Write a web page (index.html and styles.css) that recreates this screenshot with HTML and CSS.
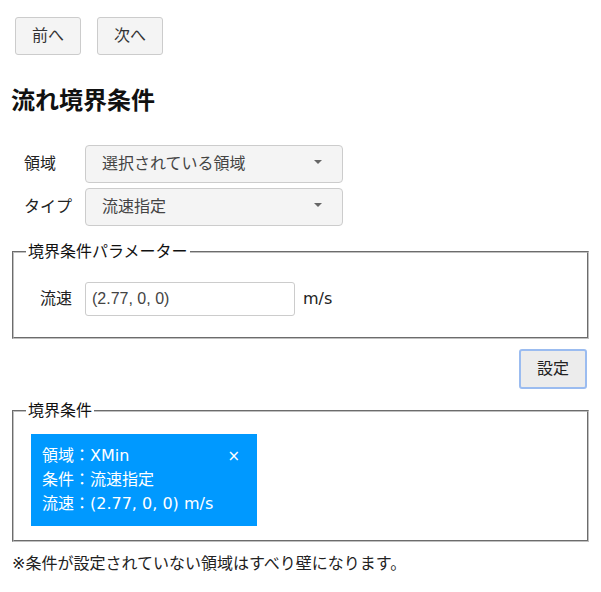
FILE: index.html
```html
<!DOCTYPE html>
<html lang="ja">
<head>
    <meta charset="UTF-8">
    <meta name="viewport" content="width=device-width, initial-scale=1.0">
    <title>流れ境界条件</title>
    <link rel="stylesheet" href="styles.css">
</head>
<body>
<div class="nav">
    <button class="nav-btn">前へ</button>
    <button class="nav-btn">次へ</button>
</div>

<h2 class="title">流れ境界条件</h2>

<div class="form">
    <label class="form-label" for="region">領域</label>
    <div class="select-wrap">
        <select id="region" class="select">
            <option>選択されている領域</option>
        </select>
    </div>
    <label class="form-label" for="type">タイプ</label>
    <div class="select-wrap">
        <select id="type" class="select">
            <option>流速指定</option>
        </select>
    </div>
</div>

<fieldset class="group params">
    <legend>境界条件パラメーター</legend>
    <div class="param-row">
        <label class="param-label" for="velocity">流速</label>
        <input id="velocity" class="text-input" type="text" value="(2.77, 0, 0)">
        <span class="unit">m/s</span>
    </div>
</fieldset>

<div class="actions">
    <button class="set-btn">設定</button>
</div>

<fieldset class="group">
    <legend>境界条件</legend>
    <div class="condition">
        <div class="condition-line">
            <span>領域：XMin</span>
            <span class="close">×</span>
        </div>
        <div class="condition-line">条件：流速指定</div>
        <div class="condition-line">流速：(2.77, 0, 0) m/s</div>
    </div>
</fieldset>

<p class="note">※条件が設定されていない領域はすべり壁になります。</p>
</body>
</html>
```

FILE: styles.css
```css
body {
    font-family: "DejaVu Sans", "Noto Sans CJK JP", sans-serif;
    font-size: 16px;
    line-height: 24px;
    color: #222;
    margin: 10px;
}

.nav {
    display: flex;
    gap: 16px;
    margin: 7px 0 0 5px;
}

.nav-btn {
    font: inherit;
    color: #333;
    width: 66px;
    height: 38px;
    background-color: #f4f4f4;
    border: 1px solid #ccc;
    border-radius: 3px;
    padding: 0;
}

.title {
    font-size: 24px;
    line-height: 32px;
    font-weight: bold;
    color: #111;
    margin: 30px 0 28px 1px;
}

.form {
    display: grid;
    grid-template-columns: 61px 258px;
    row-gap: 5px;
    align-items: center;
    padding-left: 14px;
}

.form-label {
    color: #222;
}

.select-wrap {
    position: relative;
}

.select-wrap::after {
    content: "";
    position: absolute;
    right: 21px;
    top: 15px;
    border-left: 4px solid transparent;
    border-right: 4px solid transparent;
    border-top: 4px solid #666;
}

.select {
    appearance: none;
    -webkit-appearance: none;
    font: inherit;
    color: #444;
    width: 100%;
    height: 38px;
    padding: 0 30px 0 16px;
    background-color: #f4f4f4;
    border: 1px solid #ccc;
    border-radius: 4px;
}

.group {
    margin: 0 2px;
    padding: 6px 12px 10px;
    border: 2px groove #c0c0c0;
}

.params {
    margin-top: 14px;
}

.group legend {
    padding: 0 2px;
    line-height: 24px;
    color: #111;
}

.param-row {
    display: flex;
    align-items: center;
    margin: 12px 0 11px;
}

.param-label {
    margin-left: 14px;
    width: 45px;
}

.text-input {
    font-family: "Liberation Sans", Arial, sans-serif;
    font-size: 16px;
    color: #444;
    width: 210px;
    height: 34px;
    box-sizing: border-box;
    padding: 0 6px;
    border: 1px solid #ccc;
    border-radius: 3px;
}

.unit {
    margin-left: 8px;
}

.actions {
    display: flex;
    justify-content: flex-end;
    margin: 10px 4px 10px 0;
}

.set-btn {
    font: inherit;
    color: #222;
    width: 68px;
    height: 40px;
    padding: 0;
    background-color: #ececec;
    border: 2px solid #9bbcf0;
    border-radius: 3px;
}

.condition {
    width: 226px;
    box-sizing: border-box;
    margin: 5px 0 4px 5px;
    padding: 10px 17px 10px 11px;
    background-color: #0099ff;
    color: #fff;
}

.condition-line {
    display: flex;
    justify-content: space-between;
}

.close {
    font-size: 15px;
}

.note {
    margin: 10px 0 0 2px;
}
```
